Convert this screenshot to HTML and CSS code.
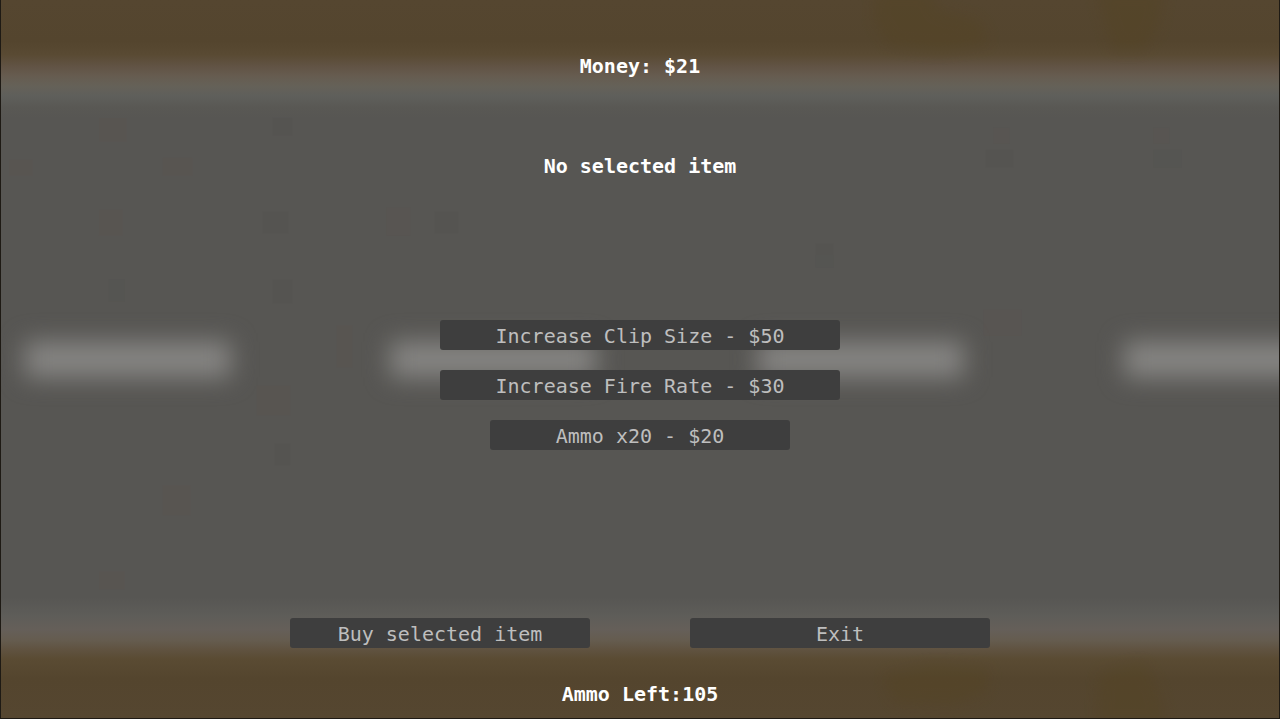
FILE: index.html
```html
<!DOCTYPE html>
<html lang="en">
<head>
<meta charset="utf-8">
<meta name="viewport" content="width=device-width, initial-scale=1">
<title>Shop</title>
<link rel="stylesheet" href="styles.css">
</head>
<body>
<div class="shop">
  <svg class="road" viewBox="0 0 1280 719" preserveAspectRatio="none" aria-hidden="true">
    <defs>
      <linearGradient id="ground" x1="0" y1="0" x2="0" y2="719" gradientUnits="userSpaceOnUse">
        <stop offset="0" stop-color="#554630"/>
        <stop offset=".058" stop-color="#54452e"/>
        <stop offset=".076" stop-color="#594a33"/>
        <stop offset=".092" stop-color="#615344"/>
        <stop offset=".106" stop-color="#665c50"/>
        <stop offset=".12" stop-color="#656158"/>
        <stop offset=".133" stop-color="#5f5f5b"/>
        <stop offset=".15" stop-color="#595854"/>
        <stop offset=".165" stop-color="#575653"/>
        <stop offset=".832" stop-color="#575653"/>
        <stop offset=".858" stop-color="#5e5d59"/>
        <stop offset=".877" stop-color="#655f59"/>
        <stop offset=".892" stop-color="#655c4f"/>
        <stop offset=".904" stop-color="#605341"/>
        <stop offset=".918" stop-color="#5a4b33"/>
        <stop offset=".945" stop-color="#54452e"/>
        <stop offset="1" stop-color="#554630"/>
      </linearGradient>
      <filter id="soft" x="-20%" y="-200%" width="140%" height="500%" color-interpolation-filters="sRGB">
        <feGaussianBlur stdDeviation="12"/>
      </filter>
      <filter id="haze" x="-50%" y="-50%" width="200%" height="200%" color-interpolation-filters="sRGB">
        <feGaussianBlur stdDeviation="7"/>
      </filter>
    </defs>
    <rect width="1280" height="719" fill="url(#ground)"/>
    <g fill="#868583">
      <rect x="24" y="342" width="206" height="36" filter="url(#soft)"/>
      <rect x="390" y="342" width="206" height="36" filter="url(#soft)"/>
      <rect x="758" y="342" width="206" height="36" filter="url(#soft)"/>
      <rect x="1125" y="342" width="206" height="36" filter="url(#soft)"/>
    </g>
    <g fill="#54441e" opacity=".3" filter="url(#haze)">
      <path d="M876-10h54l10 20 40 10 10 24-50 8-50-6-16-26z"/>
      <path d="M1096-10h70l-8 40-14 20h-30z"/>
      <path d="M884 676l50-10 56 4-4 24-32 12-60-2z"/>
      <path d="M1100 674l44-10 14 22 10 40h-70z"/>
    </g>
    <g fill="#5c5450" opacity=".35">
      <rect x="98" y="118" width="28" height="24"/>
      <rect x="8" y="160" width="24" height="16"/>
      <rect x="162" y="158" width="30" height="18"/>
      <rect x="98" y="210" width="24" height="26"/>
      <rect x="386" y="208" width="24" height="28"/>
      <rect x="336" y="326" width="16" height="42"/>
      <rect x="256" y="386" width="34" height="30"/>
      <rect x="984" y="310" width="38" height="26"/>
      <rect x="162" y="486" width="28" height="30"/>
      <rect x="98" y="572" width="26" height="18"/>
      <rect x="1154" y="128" width="16" height="16"/>
      <rect x="994" y="128" width="16" height="16"/>
    </g>
    <g fill="#53524f" opacity=".3">
      <rect x="272" y="118" width="20" height="18"/>
      <rect x="262" y="212" width="26" height="22"/>
      <rect x="434" y="212" width="24" height="22"/>
      <rect x="272" y="280" width="20" height="24"/>
      <rect x="108" y="280" width="16" height="22"/>
      <rect x="816" y="244" width="18" height="24"/>
      <rect x="986" y="150" width="28" height="18"/>
      <rect x="1154" y="150" width="28" height="18"/>
      <rect x="274" y="444" width="16" height="22"/>
    </g>
  </svg>

  <header class="status">
    <p class="line">Money: $21</p>
    <p class="line">No selected item</p>
  </header>

  <main class="items">
    <button class="button wide" type="button">Increase Clip Size - $50</button>
    <button class="button wide" type="button">Increase Fire Rate - $30</button>
    <button class="button" type="button">Ammo x20 - $20</button>
  </main>

  <footer class="footer">
    <div class="actions">
      <button class="button" type="button">Buy selected item</button>
      <button class="button" type="button">Exit</button>
    </div>
    <p class="line">Ammo Left:105</p>
  </footer>
</div>
</body>
</html>
```

FILE: styles.css
```css
* {
  box-sizing: border-box;
}

body {
  margin: 0;
  background: #575653;
  font-family: "DejaVu Sans Mono", "Liberation Mono", monospace;
  font-size: 20px;
  line-height: 30px;
}

.shop {
  position: relative;
  isolation: isolate;
  display: flex;
  flex-direction: column;
  justify-content: space-between;
  align-items: center;
  gap: 32px;
  min-height: 100vh;
  padding: 51px 16px 9px;
  border: 1px solid #1e1a14;
  border-top: 0;
}

.road {
  position: absolute;
  inset: 0;
  z-index: -1;
  width: 100%;
  height: 100%;
}

.status {
  display: flex;
  flex-direction: column;
  gap: 70px;
  text-align: center;
}

.line {
  margin: 0;
  color: #fff;
  font-weight: bold;
}

.items {
  display: flex;
  flex-direction: column;
  align-items: center;
  gap: 20px;
  width: 100%;
  padding-bottom: 30px;
}

.button {
  width: 300px;
  max-width: 100%;
  height: 30px;
  padding: 2px 0 0;
  border: 0;
  border-radius: 3px;
  background: #3e3e3e;
  color: #bebebe;
  font: inherit;
  line-height: 28px;
  cursor: pointer;
}

.wide {
  width: 400px;
}

.button:hover,
.button:focus-visible {
  background: #4a4a4a;
}

.footer {
  display: flex;
  flex-direction: column;
  align-items: center;
  gap: 31px;
  width: 100%;
}

.actions {
  display: flex;
  flex-wrap: wrap;
  justify-content: center;
  gap: 20px 100px;
  width: 100%;
}
```
